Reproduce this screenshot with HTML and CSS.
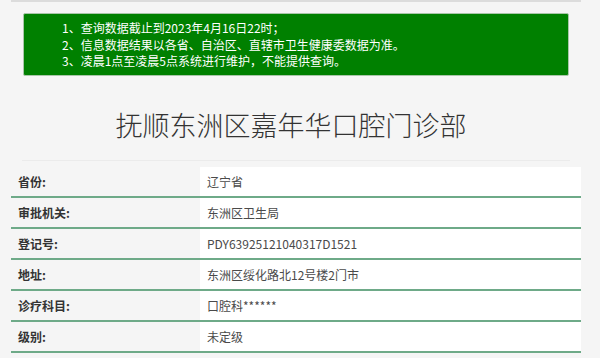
FILE: index.html
```html
<!DOCTYPE html>
<html lang="zh-CN">
<head>
<meta charset="utf-8">
<title>抚顺东洲区嘉年华口腔门诊部</title>
<link rel="stylesheet" href="styles.css">
</head>
<body>
<div class="page">
  <div class="topline"></div>
  <div class="notice">
    <p>1、查询数据截止到2023年4月16日22时；</p>
    <p>2、信息数据结果以各省、自治区、直辖市卫生健康委数据为准。</p>
    <p>3、凌晨1点至凌晨5点系统进行维护，不能提供查询。</p>
  </div>
  <h1 class="title">抚顺东洲区嘉年华口腔门诊部</h1>
  <div class="divider"></div>
  <table class="info">
    <tr><th>省份:</th><td>辽宁省</td></tr>
    <tr><th>审批机关:</th><td>东洲区卫生局</td></tr>
    <tr><th>登记号:</th><td>PDY63925121040317D1521</td></tr>
    <tr><th>地址:</th><td>东洲区绥化路北12号楼2门市</td></tr>
    <tr><th>诊疗科目:</th><td>口腔科******</td></tr>
    <tr><th>级别:</th><td>未定级</td></tr>
  </table>
</div>
</body>
</html>
```
FILE: styles.css
```css
html, body {
  margin: 0;
  padding: 0;
  background: #f5f5f5;
  font-family: "Noto Sans CJK SC", "Noto Sans", sans-serif;
  color: #333;
}
.page {
  width: 570px;
  margin-left: 11px;
}
.topline {
  height: 2px;
  background: #dcdcdc;
}
.notice {
  margin: 11px 12px 0;
  background: #008000;
  border: 1px solid #a9c6a9;
  border-radius: 2px;
  padding: 6px 0 5px 38px;
  color: #fff;
  font-size: 12px;
  line-height: 16.5px;
}
.notice p {
  margin: 0;
}
.title {
  margin: 30px 0 0;
  text-align: center;
  font-size: 27px;
  font-weight: 300;
  line-height: 38px;
  color: #333;
  padding-right: 10px;
}
.divider {
  margin: 16px 11px 0;
  height: 1px;
  background: #ebebeb;
}
.info {
  margin-top: 6px;
  width: 570px;
  border-collapse: collapse;
  font-size: 12px;
}
.info th, .info td {
  height: 29px;
  padding: 0 0 0 7px;
  border-bottom: 2px solid #6eaa88;
  text-align: left;
  vertical-align: middle;
}
.info th {
  width: 182px;
  background: #f5f5f5;
  font-weight: bold;
  color: #333;
}
.info td {
  background: #fff;
  color: #4a4a4a;
}
```
